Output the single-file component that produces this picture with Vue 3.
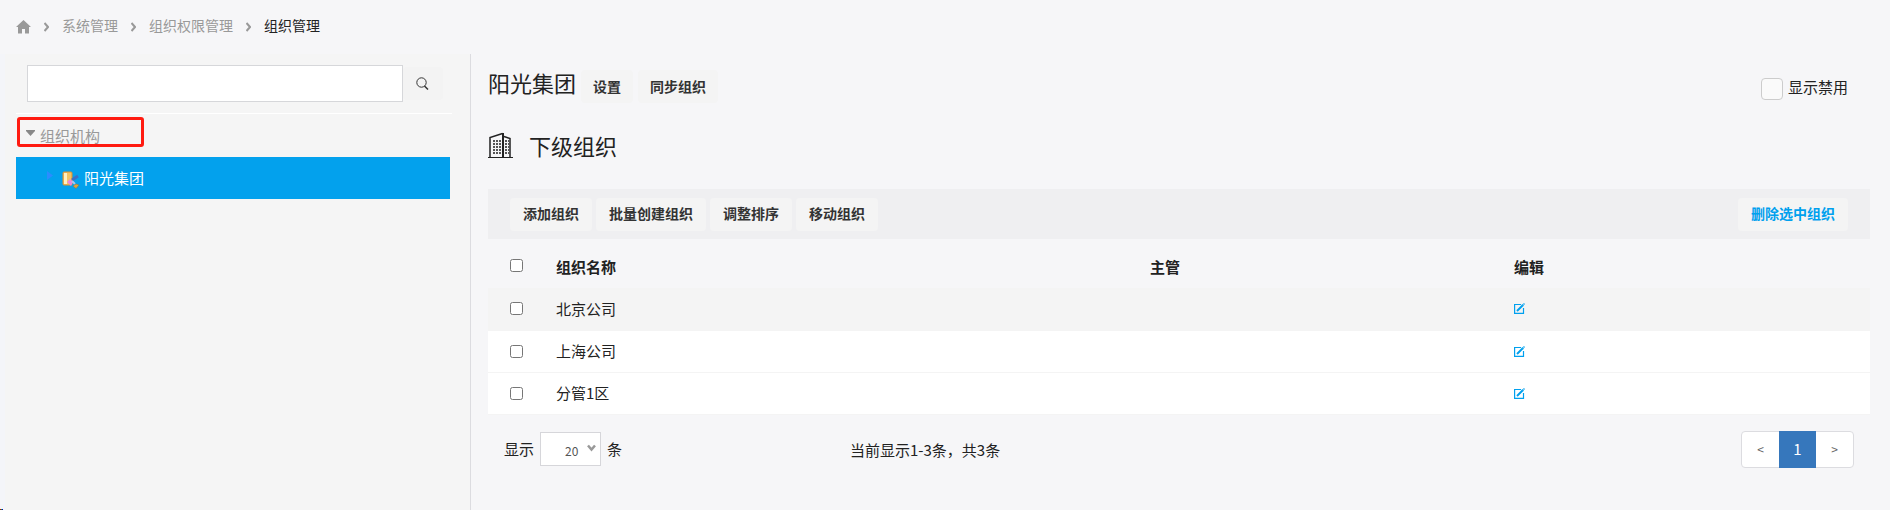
<template>
    <div class="page">
        <nav class="breadcrumb">
            <a href="#" class="home" aria-label="首页">
                <svg width="15" height="14" viewBox="0 0 15 14">
                    <path d="M7.5 0 L15 7 H13 V13.500 H9 V9 H6 V13.500 H2 V7 H0 Z" fill="#999" />
                </svg>
            </a>
            <template v-for="(crumb, i) in crumbs" :key="crumb">
                <svg class="sep" width="5" height="10" viewBox="0 0 5 10">
                    <path d="M0.500 1 L4 5 L0.500 9" fill="none" stroke="#999" stroke-width="2" />
                </svg>
                <a v-if="i < crumbs.length - 1" href="#">{{ crumb }}</a>
                <span v-else class="current">{{ crumb }}</span>
            </template>
        </nav>
        <div class="body">
            <aside class="side">
                <form class="search" @submit.prevent>
                    <input type="text" v-model="keyword" aria-label="搜索组织" />
                    <button type="submit" aria-label="搜索">
                        <svg width="13" height="13" viewBox="0 0 13 13" fill="none" stroke="#333">
                            <circle cx="5.500" cy="5.500" r="4.700" />
                            <path d="M8.500 9 L12 12.500" stroke-width="1.500" />
                        </svg>
                    </button>
                </form>
                <div class="tree">
                    <button type="button" class="root" @click="open = !open">
                        <svg width="9" height="6" viewBox="0 0 9 6">
                            <path d="M0 0 H9 V1 L4.500 6 L0 1 Z" fill="#888" />
                        </svg>
                        <span>组织机构</span>
                    </button>
                    <a v-if="open" href="#" class="node">
                        <svg class="arrow" width="6" height="9" viewBox="0 0 6 9">
                            <path d="M0 0 L6 4.500 L0 9 Z" fill="#2b8cff" />
                        </svg>
                        <svg class="org" width="17" height="18" viewBox="0 0 17 18">
                            <rect x="1" y="1" width="9" height="13" rx="1" fill="#f2c463" stroke="#d98f35" />
                            <rect x="2" y="2" width="3" height="11" fill="#fff0c0" />
                            <path d="M10 9 L16 5" stroke="#3c6fc4" stroke-width="3" />
                            <path d="M5 11 L8 8 L11 11 L9 15 Z" fill="#e887dc" />
                            <path d="M10 10 L13 13" stroke="#a9c7ee" stroke-width="2" />
                            <path d="M11 15 L14 13 L17 14 L14 17.500 Z" fill="#e0a43c" stroke="#99703c" stroke-width="0.500" />
                        </svg>
                        <span>阳光集团</span>
                    </a>
                </div>
            </aside>
            <main class="main">
                <header class="title">
                    <h1>阳光集团</h1>
                    <button type="button" class="btn">设置</button>
                    <button type="button" class="btn">同步组织</button>
                    <label class="disabled-toggle">
                        <input type="checkbox" v-model="showDisabled" />
                        <span>显示禁用</span>
                    </label>
                </header>
                <h2>
                    <svg width="25" height="26" viewBox="0 0 25 26" fill="none" stroke="#222">
                        <path d="M0 25.500 H25" />
                        <path d="M2 25 V5.500 L14.500 1.500" stroke-width="1.500" />
                        <path d="M15 25 V1" stroke-width="2" />
                        <path d="M16 4.500 L22 6.500 V25" stroke-width="1.500" />
                        <path d="M5 9 H13 M5 12 H13 M5 15 H13 M5 18 H13 M5 21 H13" stroke-width="1.600" stroke-dasharray="2 1" />
                        <path d="M17 9 H21 M17 12 H21 M17 15 H21 M17 18 H21 M17 21 H21" stroke-width="1.500" stroke-dasharray="2 1" />
                    </svg>
                    <span>下级组织</span>
                </h2>
                <div class="toolbar">
                    <button v-for="action in actions" :key="action" type="button" class="btn">{{ action }}</button>
                    <button type="button" class="btn delete">删除选中组织</button>
                </div>
                <table>
                    <thead>
                        <tr>
                            <th class="check"><input type="checkbox" :checked="allSelected" aria-label="全选" @change="toggleAll" /></th>
                            <th>组织名称</th>
                            <th class="manager">主管</th>
                            <th class="action">编辑</th>
                        </tr>
                    </thead>
                    <tbody>
                        <tr v-for="org in orgs" :key="org.id">
                            <td class="check"><input type="checkbox" v-model="selected" :value="org.id" :aria-label="org.name" /></td>
                            <td>{{ org.name }}</td>
                            <td>{{ org.manager }}</td>
                            <td>
                                <a href="#" class="edit" :aria-label="'编辑' + org.name">
                                    <svg width="11" height="11" viewBox="0 0 11 11" fill="none" stroke="#00a0ee" stroke-width="1.200">
                                        <path d="M7 1.500 H0.600 V10.400 H9.500 V5" />
                                        <path d="M3 8 L8.500 2.500" stroke-width="2" />
                                        <path d="M8 1.500 L9.500 3 M9.500 0.500 L10.500 1.500" />
                                    </svg>
                                </a>
                            </td>
                        </tr>
                    </tbody>
                </table>
                <footer class="footer">
                    <div class="size">
                        <label for="page-size">显示</label>
                        <span class="select">
                            <select id="page-size" v-model="pageSize">
                                <option v-for="n in [10, 20, 50]" :key="n" :value="n">{{ n }}</option>
                            </select>
                            <svg width="9" height="8" viewBox="0 0 9 8">
                                <path d="M1 1.500 L4.500 5.500 L8 1.500" fill="none" stroke="#999" stroke-width="2.500" />
                            </svg>
                        </span>
                        <span>条</span>
                    </div>
                    <p>当前显示1-{{ orgs.length }}条，共{{ orgs.length }}条</p>
                    <div class="pager">
                        <button type="button" aria-label="上一页">&lt;</button>
                        <button type="button" class="active">1</button>
                        <button type="button" aria-label="下一页">&gt;</button>
                    </div>
                </footer>
            </main>
        </div>
        <span class="corner"></span>
    </div>
</template>
<script setup>
import { ref, computed } from 'vue'

const crumbs = ['系统管理', '组织权限管理', '组织管理']
const actions = ['添加组织', '批量创建组织', '调整排序', '移动组织']
const orgs = ref([
    { id: 1, name: '北京公司', manager: '' },
    { id: 2, name: '上海公司', manager: '' },
    { id: 3, name: '分管1区', manager: '' }
])
const keyword = ref('')
const open = ref(true)
const showDisabled = ref(false)
const selected = ref([])
const pageSize = ref(20)

const allSelected = computed(() => selected.value.length === orgs.value.length)

const toggleAll = (e) => {
    selected.value = e.target.checked ? orgs.value.map(org => org.id) : []
}
</script>
<style>
body {
    background: #f6f6f8;
}
</style>
<style scoped>
.page {
    display: flex;
    flex-direction: column;
    min-height: 100vh;
    color: #222;
    font: 15px/20px "Noto Sans CJK SC", sans-serif;
}

.page * {
    box-sizing: border-box;
}

button,
input,
select {
    font: inherit;
    color: inherit;
    margin: 0;
}

button {
    border: 0;
    padding: 0;
    background: none;
    cursor: pointer;
}

a {
    color: inherit;
    text-decoration: none;
}

svg {
    display: block;
}

.breadcrumb {
    display: flex;
    align-items: center;
    gap: 13px;
    height: 54px;
    padding: 0 16px;
    font-size: 14px;
    color: #999;
}

.breadcrumb a,
.current {
    padding-bottom: 4px;
}

.breadcrumb .home {
    padding: 0;
}

.current {
    color: #222;
}

.body {
    display: flex;
    flex: 1;
}

.side {
    flex: 0 0 471px;
    padding: 11px 18px 0 11px;
    border-left: 5px solid #f4f5f9;
    border-right: 1px solid #dcdce0;
    background: #f5f5f5;
}

.search {
    display: flex;
    align-items: center;
    padding: 0 9px 11px 11px;
    border-bottom: 1px solid #fff;
}

.search input {
    flex: 1;
    min-width: 0;
    height: 37px;
    padding: 0 8px;
    border: 1px solid #d6d7da;
    background: #fff;
}

.search button {
    display: flex;
    align-items: center;
    width: 40px;
    height: 33px;
    padding-left: 13px;
    border-radius: 4px;
    background: #f3f3f3;
}

.root {
    display: flex;
    gap: 5px;
    width: 127px;
    height: 30px;
    margin: 3px 0 10px 1px;
    padding: 6px;
    border: 3px solid #ff1a10;
    border-radius: 3px;
    color: #999;
}

.root svg {
    margin-top: 4px;
}

.node {
    display: flex;
    align-items: center;
    height: 42px;
    margin-right: 2px;
    padding-left: 31px;
    background: #03a1ed;
    color: #fff;
}

.arrow {
    margin: 0 9px 6px 0;
}

.org {
    margin: 4px 5px 0 0;
}

.main {
    flex: 1;
    min-width: 0;
    padding: 16px 20px 20px 17px;
}

.title {
    display: flex;
    align-items: center;
    gap: 5px;
}

.title .btn {
    padding: 0 12px 2px;
}

h1,
h2 {
    margin: 0;
    font-size: 22px;
    line-height: 24px;
    font-weight: 400;
}

h1 {
    padding-bottom: 9px;
}

h2 {
    display: flex;
    align-items: center;
    gap: 16px;
    margin: 29px 0 31px;
}

.btn {
    height: 33px;
    padding: 0 13px 2px;
    border-radius: 4px;
    background: #f4f4f4;
    color: #333;
    font-size: 14px;
    font-weight: 700;
    white-space: nowrap;
}

.disabled-toggle {
    display: flex;
    align-items: center;
    gap: 5px;
    margin-left: auto;
    padding: 4px 22px 0 0;
}

.disabled-toggle input {
    appearance: none;
    width: 22px;
    height: 22px;
    border: 1px solid #ccc;
    border-radius: 4px;
    background: #fafafa;
}

.disabled-toggle input:checked {
    background: #00a0ee;
}

.disabled-toggle span {
    padding-bottom: 3px;
}

.toolbar {
    display: flex;
    align-items: center;
    gap: 4px;
    height: 50px;
    padding: 0 22px;
    background: #efeff1;
}

.delete {
    margin-left: auto;
    color: #00a0ee;
}

table {
    width: 100%;
    table-layout: fixed;
    border-collapse: collapse;
}

th,
td {
    height: 42px;
    padding: 0 8px;
    text-align: left;
}

th {
    height: 49px;
    padding-top: 6px;
    font-weight: 700;
}

th.check {
    width: 60px;
    padding-top: 4px;
}

.manager,
.action {
    width: 364px;
}

.check {
    padding-left: 22px;
}

.check input {
    display: block;
    width: 13px;
    height: 13px;
}

tbody tr {
    background: #fff;
    border-bottom: 1px solid #f4f4f4;
}

tbody tr:first-child {
    background: #f4f4f4;
}

.edit {
    display: block;
    width: 11px;
}

.footer {
    display: grid;
    grid-template-columns: 346px 1fr auto;
    align-items: center;
    padding: 16px 16px 0 16px;
}

.footer p {
    margin: 0;
    padding-top: 2px;
}

.size {
    display: flex;
    align-items: center;
    gap: 6px;
}

.select {
    position: relative;
}

.select select {
    display: block;
    appearance: none;
    width: 61px;
    height: 34px;
    padding: 4px 20px 0 24px;
    border: 1px solid #d6d6da;
    border-radius: 0;
    background: #fff;
    color: #555;
    font-size: 12px;
}

.select svg {
    position: absolute;
    right: 5px;
    top: 12px;
    pointer-events: none;
}

.pager {
    display: flex;
    border: 1px solid #dcdce0;
    border-radius: 4px;
    background: #fff;
}

.pager button {
    width: 37px;
    height: 35px;
    color: #666;
    font-size: 12px;
}

.pager .active {
    height: 37px;
    margin: -1px 0;
    background: #3677bc;
    color: #fff;
    font-size: 15px;
}

.corner {
    position: fixed;
    left: 0;
    bottom: 0;
    width: 3px;
    height: 1px;
    background: linear-gradient(90deg, #c00 33%, #093 33% 66%, #00c 66%);
}
</style>
